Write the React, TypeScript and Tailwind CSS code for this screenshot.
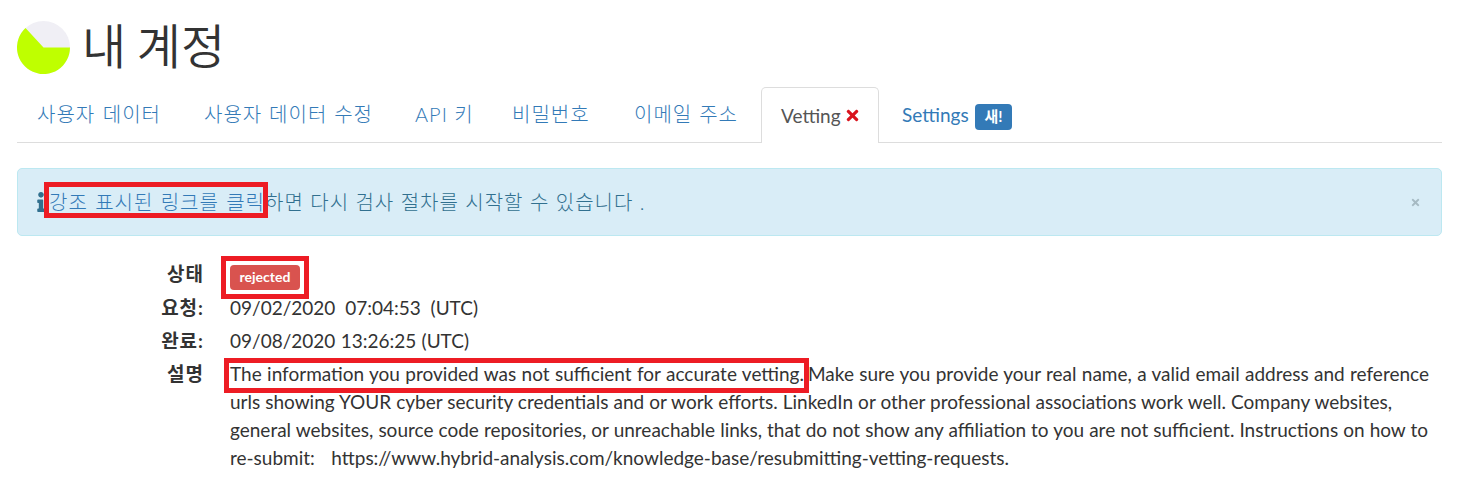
import type { ReactNode } from 'react';
import { FaInfo, FaTimes } from 'react-icons/fa';

const tabs = [
  { label: '사용자 데이터', box: 'w-[167px]', text: 'w-[124px]' },
  { label: '사용자 데이터 수정', box: 'w-[211px]', text: 'w-[169px]' },
  { label: 'API 키', box: 'w-[97px]', text: 'w-[53px]' },
  { label: '비밀번호', box: 'w-[122px]', text: 'w-[80px]' },
  { label: '이메일 주소', box: 'w-[126px]', text: 'w-[104px]' },
];

function Line({ className, children }: { className: string; children: ReactNode }) {
  return <span className={`block whitespace-nowrap [text-align-last:justify] ${className}`}>{children}</span>;
}

function Highlight({ className }: { className: string }) {
  return <span className={`pointer-events-none absolute border-5 border-[#ed1c24] ${className}`} />;
}

function Row({ label, className, children }: { label: string; className: string; children: ReactNode }) {
  return (
    <div className={`flex ${className}`}>
      <dt className="mr-[26px] w-[187px] shrink-0 text-right text-[19px] font-bold tracking-[1px] whitespace-nowrap">{label}</dt>
      <dd className="relative">{children}</dd>
    </div>
  );
}

export default function App() {
  return (
    <main className="h-[492px] w-[1459px] overflow-hidden bg-white pl-[17px] font-['Lato','Noto_Sans_CJK_KR',sans-serif] text-[19px] leading-[28px] text-[#333333]">
      <header className="flex h-[87px] items-start">
        <svg className="mt-[21px] h-[53px] w-[53px]" viewBox="0 0 53 53">
          <circle cx="26.5" cy="26.5" r="26.5" fill="#f0eff5" />
          <path d="M26.5 26.5H53A26.5 26.5 0 1 1 8.5 7.1Z" fill="#bfff00" />
        </svg>
        <h1 className="mt-[11px] ml-[12px] font-['Noto_Sans_CJK_KR',sans-serif] text-[48px] leading-[64px] font-[350]">내 계정</h1>
      </header>
      <nav className="flex h-[56px] w-[1425px] border-b border-[#dddddd] pl-[20px] text-[#337ab7]">
        {tabs.map((tab) => (
          <a key={tab.label} className={`pt-[13px] ${tab.box}`}>
            <Line className={`font-['Lato','Noto_Sans_CJK_KR',sans-serif] text-[20px] font-light tracking-[1px] ${tab.text}`}>{tab.label}</Line>
          </a>
        ))}
        <a className="ml-[1px] flex h-[56px] w-[118px] shrink-0 items-center rounded-t-[5px] border border-b-0 border-[#dddddd] bg-white pl-[19px] text-[#555555]">
          <Line className="w-[60px]">Vetting</Line>
          <FaTimes className="ml-[3px] h-[17px] w-[17px] text-[#d9141e]" />
        </a>
        <a className="ml-[23px] flex h-[56px] items-center">
          <Line className="w-[69px]">Settings</Line>
          <span className="mt-[4px] ml-[4px] flex h-[26px] w-[37px] items-center justify-center rounded-[4px] bg-[#337ab7] pb-[2px] text-[15px] font-bold text-white">새!</span>
        </a>
      </nav>
      <section className="relative mt-[25px] flex h-[68px] w-[1425px] items-center rounded-[5px] border border-[#bce8f1] bg-[#d9edf7] pl-[19px] text-[20px] font-light tracking-[1px] text-[#31708f]">
        <FaInfo className="h-[20px] w-[8px] shrink-0" />
        <Line className="ml-[4px] w-[216px] text-[#337ab7]">강조 표시된 링크를 클릭</Line>
        <Line className="w-[373px]">하면 다시 검사 절차를 시작할 수 있습니다 .</Line>
        <FaTimes className="mr-[20px] ml-auto h-[11px] w-[11px] text-[#a6bac3]" />
        <Highlight className="top-[13px] left-[26px] h-[36px] w-[224px]" />
      </section>
      <dl className="mt-[24px]">
        <Row label="상태" className="h-[34px]">
          <span className="mt-[5px] flex h-[25px] w-[70px] items-center justify-center rounded-[4px] bg-[#d9534f] pb-[2px] text-[14px] font-bold text-white">rejected</span>
          <Highlight className="-top-[4px] -left-[9px] h-[43px] w-[88px]" />
        </Row>
        <Row label="요청:" className="h-[33px]"><Line className="w-[248px]">09/02/2020 07:04:53 (UTC)</Line></Row>
        <Row label="완료:" className="h-[33px]"><Line className="w-[239px]">09/08/2020 13:26:25 (UTC)</Line></Row>
        <Row label="설명" className="">
          <div className="flex">
            <Line className="w-[574px]">The information you provided was not sufficient for accurate vetting.</Line>
            <Line className="ml-[4px] w-[621px]">Make sure you provide your real name, a valid email address and reference</Line>
          </div>
          <Line className="w-[1162px]">urls showing YOUR cyber security credentials and or work efforts. LinkedIn or other professional associations work well. Company websites,</Line>
          <Line className="w-[1198px]">general websites, source code repositories, or unreachable links, that do not show any affiliation to you are not sufficient. Instructions on how to</Line>
          <Line className="w-[779px]">re-submit: https://www.hybrid-analysis.com/knowledge-base/resubmitting-vetting-requests.</Line>
          <Highlight className="-top-[2px] -left-[6px] h-[35px] w-[585px]" />
        </Row>
      </dl>
    </main>
  );
}
